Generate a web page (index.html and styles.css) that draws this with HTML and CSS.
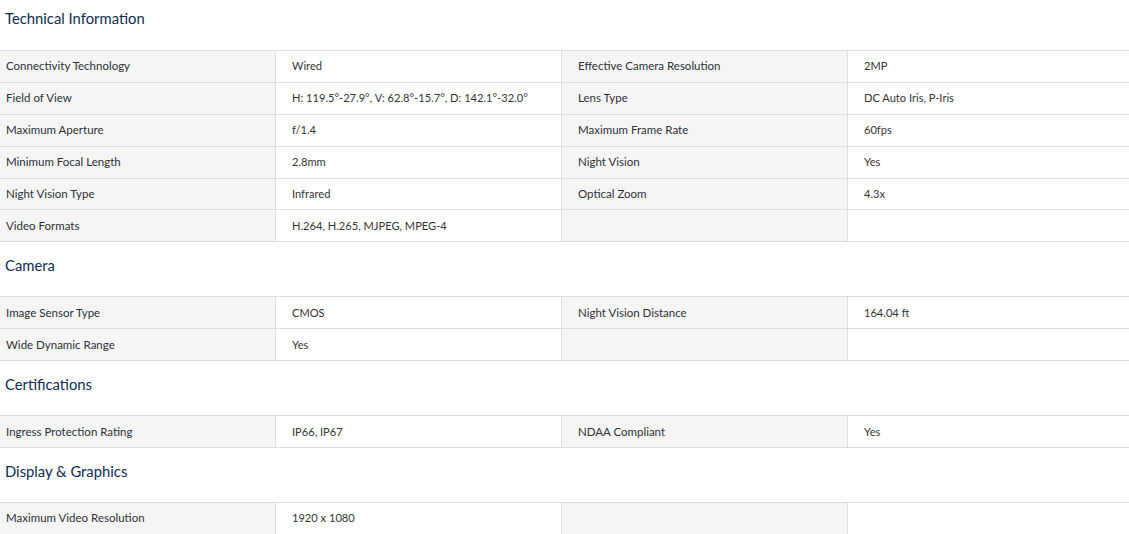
FILE: index.html
```html
<!DOCTYPE html>
<html lang="en">
<head>
<meta charset="utf-8">
<title>Technical Information</title>
<link rel="stylesheet" href="styles.css">
</head>
<body>
<div class="specs">
  <section class="group">
    <h2 class="group-title">Technical Information</h2>
    <div class="grid">
      <div class="label">Connectivity Technology</div><div class="value">Wired</div>
      <div class="label">Effective Camera Resolution</div><div class="value">2MP</div>
      <div class="label">Field of View</div><div class="value">H: 119.5°-27.9°, V: 62.8°-15.7°, D: 142.1°-32.0°</div>
      <div class="label">Lens Type</div><div class="value">DC Auto Iris, P-Iris</div>
      <div class="label">Maximum Aperture</div><div class="value">f/1.4</div>
      <div class="label">Maximum Frame Rate</div><div class="value">60fps</div>
      <div class="label">Minimum Focal Length</div><div class="value">2.8mm</div>
      <div class="label">Night Vision</div><div class="value">Yes</div>
      <div class="label">Night Vision Type</div><div class="value">Infrared</div>
      <div class="label">Optical Zoom</div><div class="value">4.3x</div>
      <div class="label">Video Formats</div><div class="value">H.264, H.265, MJPEG, MPEG-4</div>
      <div class="label"></div><div class="value"></div>
    </div>
  </section>
  <section class="group">
    <h2 class="group-title">Camera</h2>
    <div class="grid">
      <div class="label">Image Sensor Type</div><div class="value">CMOS</div>
      <div class="label">Night Vision Distance</div><div class="value">164.04 ft</div>
      <div class="label">Wide Dynamic Range</div><div class="value">Yes</div>
      <div class="label"></div><div class="value"></div>
    </div>
  </section>
  <section class="group">
    <h2 class="group-title">Certifications</h2>
    <div class="grid">
      <div class="label">Ingress Protection Rating</div><div class="value">IP66, IP67</div>
      <div class="label">NDAA Compliant</div><div class="value">Yes</div>
    </div>
  </section>
  <section class="group">
    <h2 class="group-title">Display &amp; Graphics</h2>
    <div class="grid">
      <div class="label">Maximum Video Resolution</div><div class="value">1920 x 1080</div>
      <div class="label"></div><div class="value"></div>
    </div>
  </section>
</div>
</body>
</html>
```
FILE: styles.css
```css
html, body {
  margin: 0;
  padding: 0;
  background: #ffffff;
  overflow: hidden;
}

.specs {
  display: flex;
  flex-direction: column;
}

.group-title {
  margin: 0;
  padding: 12px 5px 20px;
  font-family: Lato, "Noto Sans", sans-serif;
  font-weight: 400;
  font-size: 14.8px;
  line-height: 22px;
  color: #0f2b4f;
}

.group:first-child .group-title {
  padding-top: 7px;
  padding-bottom: 21px;
}

.grid {
  display: grid;
  grid-template-columns: 286px 286px 286px 1fr;
  margin-left: -10px;
  border-top: 1px solid #dedede;
}

.label,
.value {
  height: 29.9px;
  padding: 0 16px 1px;
  display: flex;
  align-items: center;
  border-bottom: 1px solid #dedede;
  border-right: 1px solid #dedede;
  font-size: 11px;
  color: #333333;
  box-sizing: content-box;
}

.label {
  background: #f5f5f5;
  font-family: Lato, "Noto Sans", sans-serif;
  font-size: 11.5px;
  color: #2e3035;
}

.value {
  background: #ffffff;
  font-family: Lato, sans-serif;
  font-size: 11.1px;
}

.value:nth-child(4n) {
  border-right: none;
}
```
